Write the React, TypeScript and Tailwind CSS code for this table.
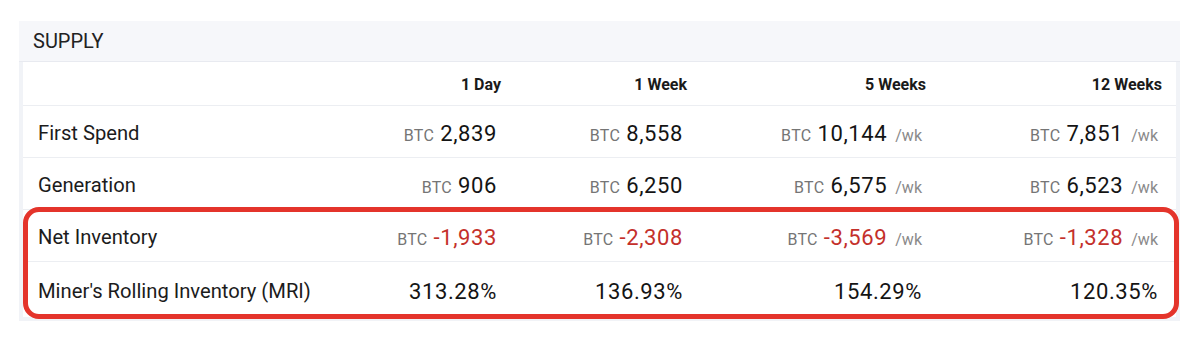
import React from "react";

type Cell = { value: string; btc?: boolean; wk?: boolean; neg?: boolean };
type Row = { label: string; cells: Cell[] };

const periods = ["1 Day", "1 Week", "5 Weeks", "12 Weeks"];

const topRows: Row[] = [
  {
    label: "First Spend",
    cells: [
      { value: "2,839", btc: true },
      { value: "8,558", btc: true },
      { value: "10,144", btc: true, wk: true },
      { value: "7,851", btc: true, wk: true },
    ],
  },
  {
    label: "Generation",
    cells: [
      { value: "906", btc: true },
      { value: "6,250", btc: true },
      { value: "6,575", btc: true, wk: true },
      { value: "6,523", btc: true, wk: true },
    ],
  },
];

const markedRows: Row[] = [
  {
    label: "Net Inventory",
    cells: [
      { value: "-1,933", btc: true, neg: true },
      { value: "-2,308", btc: true, neg: true },
      { value: "-3,569", btc: true, wk: true, neg: true },
      { value: "-1,328", btc: true, wk: true, neg: true },
    ],
  },
  {
    label: "Miner's Rolling Inventory (MRI)",
    cells: [
      { value: "313.28%" },
      { value: "136.93%" },
      { value: "154.29%" },
      { value: "120.35%" },
    ],
  },
];

const grid = "grid grid-cols-[297px_181px_186px_239px_236px] pr-[13px]";

const ValueCell = ({ cell }: { cell: Cell }) => (
  <div className="flex items-baseline justify-end pr-[4px]">
    {cell.btc && <span className="mr-[6px] text-[16px] tracking-[0.3px] text-[#757575]">BTC</span>}
    <span
      className={
        "text-[22px] tracking-[0.6px] " + (cell.neg ? "text-[#c4302b]" : "text-[#141414]")
      }
    >
      {cell.value}
    </span>
    {cell.wk && <span className="ml-[8px] text-[16px] text-[#8a8a8a]">/wk</span>}
  </div>
);

const TableRow = ({ row, last }: { row: Row; last?: boolean }) => (
  <div
    className={
      grid +
      " items-center pt-[4px] " +
      (last ? "h-[55px]" : "h-[52px] border-b border-[#eceef2]")
    }
  >
    <div className="pl-[15px] text-[20.2px] text-[#1c1c1c]">{row.label}</div>
    {row.cells.map((c, i) => (
      <ValueCell key={i} cell={c} />
    ))}
  </div>
);

const App = () => {
  return (
    <div
      className="w-[1200px] h-[350px] bg-white pt-[21px] pl-[19px]"
      style={{ fontFamily: "Roboto, 'Liberation Sans', sans-serif" }}
    >
      <div className="w-[1161px] bg-[#f1f3f7] pb-[4px]">
        {/* section header */}
        <div className="h-[41px] bg-[#f6f7fa] border-b border-[#e8eaf0] flex items-center pl-[14px] text-[20px] text-[#222]">
          SUPPLY
        </div>

        <div className="mx-[4px] bg-white">
          <div className={grid + " h-[44px] items-center pt-[2px] border-b border-[#eceef2]"}>
            <div />
            {periods.map((p) => (
              <div key={p} className="text-right text-[16px] font-bold text-[#1a1a1a]">
                {p}
              </div>
            ))}
          </div>

          {topRows.map((r) => (
            <TableRow key={r.label} row={r} />
          ))}

          <div className="relative">
            {markedRows.map((r, i) => (
              <TableRow key={r.label} row={r} last={i === markedRows.length - 1} />
            ))}
            {/* red highlight frame drawn over the rows */}
            <div className="absolute -top-[3px] -bottom-[2px] left-0 -right-[3px] rounded-[16px] border-[5px] border-[#e4342b] pointer-events-none" />
          </div>
        </div>
      </div>
    </div>
  );
};

export default App;
